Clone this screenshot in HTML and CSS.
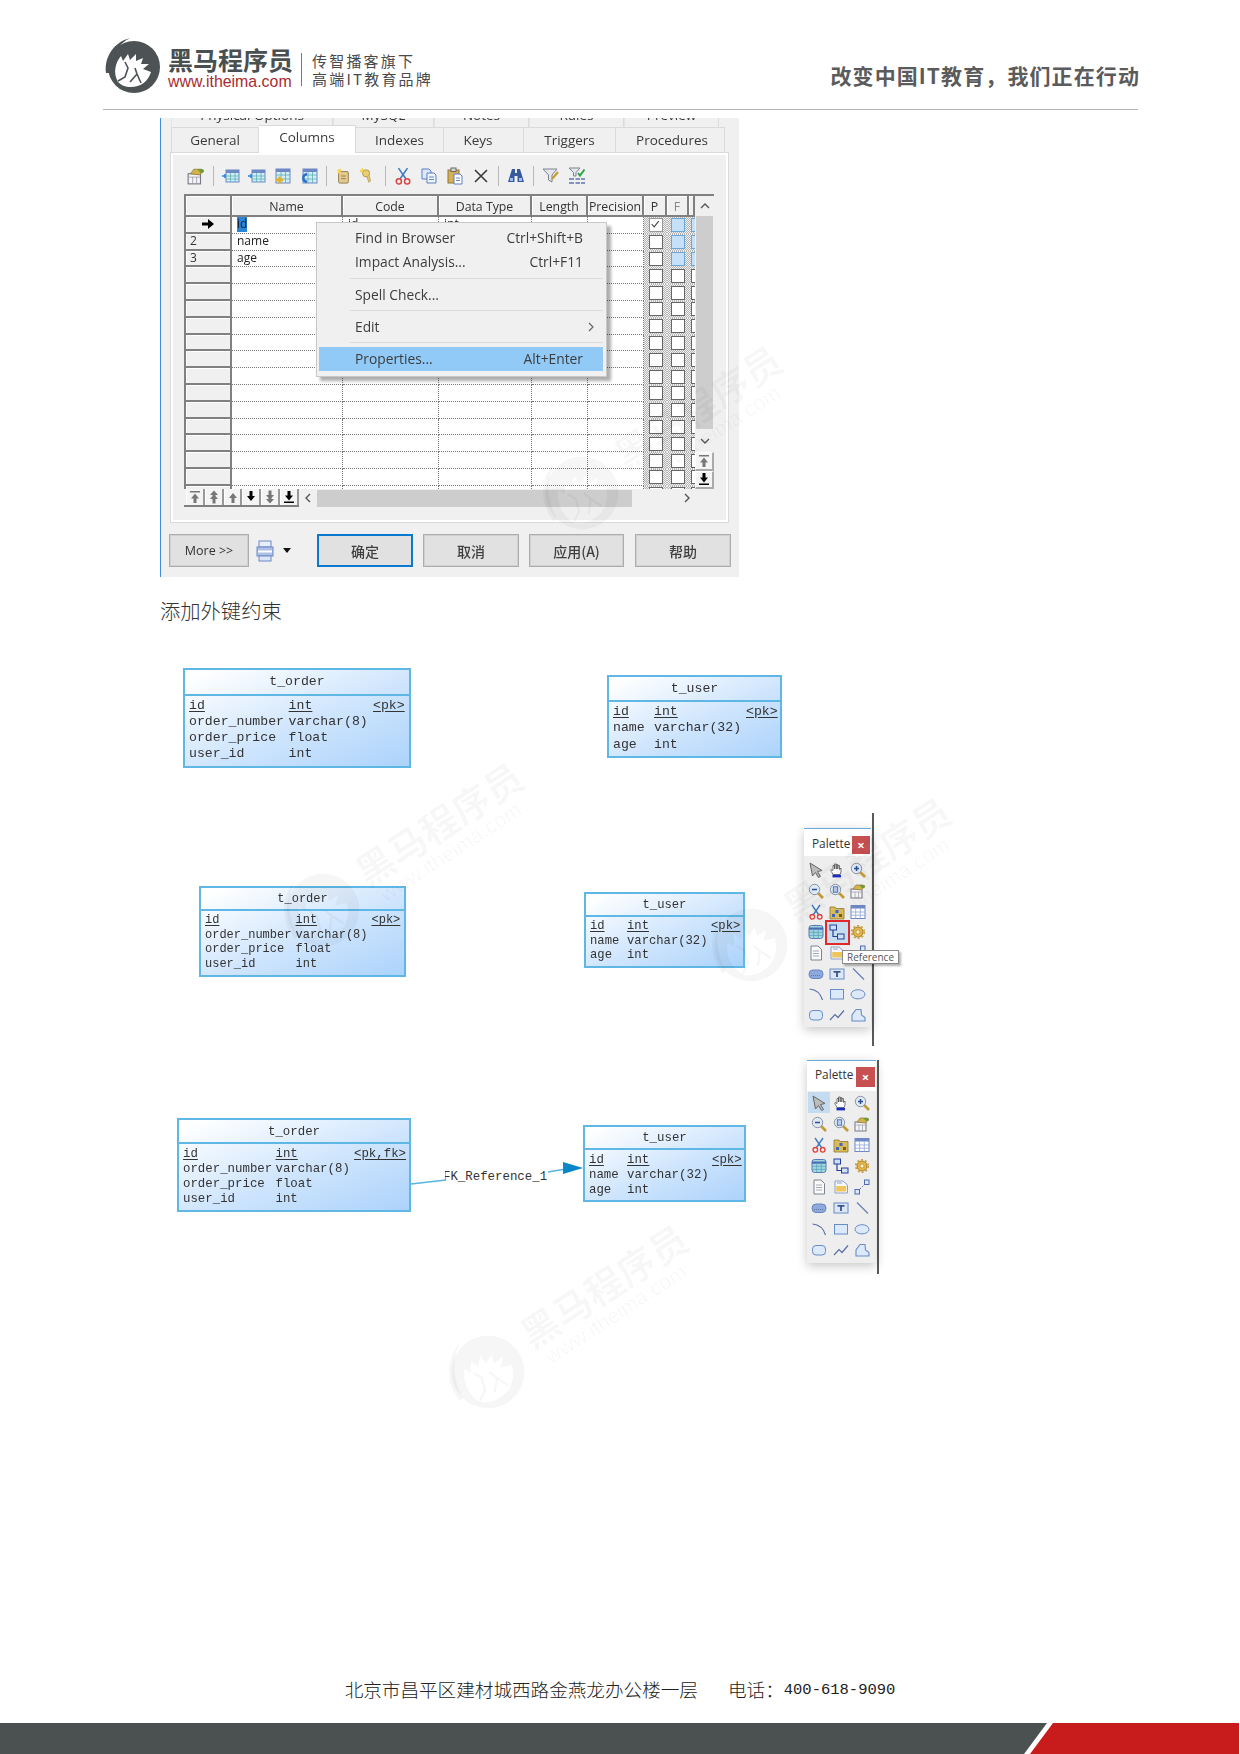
FILE: index.html
```html
<!DOCTYPE html>
<html lang="zh-CN">
<head>
<meta charset="utf-8">
<title>添加外键约束</title>
<link rel="stylesheet" href="styles.css">
</head>
<body>
<svg class="defs" xmlns="http://www.w3.org/2000/svg">
  <symbol id="horse" viewBox="0 0 60 60">
    <path fill-rule="evenodd" d="M30 4a26 26 0 1 0 0 52a26 26 0 1 0 0-52Z M14 45C9 36 11 26 17 19L19 24L24 17L26 23L32 17L32 24L39 21L37 27L45 27L39 32L47 35C44 45 36 50 27 50C21 50 17 48 14 45Z"/>
    <path d="M37 46L33 37L31 31M33 37L26 45M14 44L21 40L24 31L21 25" fill="none" stroke="currentColor" stroke-width="1.6"/>
    <path d="M2 36C0 20 10 5 26 1C14 7 6 20 5 36Z"/>
  </symbol>
  <symbol id="p-arrow" viewBox="0 0 16 16"><path d="M2 1L14 8.5L9.5 9.5L12.5 14.5L10.5 15.5L7.5 10.5L4.5 14Z" fill="#bcbcbc" stroke="#666"/></symbol>
  <symbol id="p-hand" viewBox="0 0 16 16"><path d="M4 12.5C3 10 1 8.5 2 7.5L4 8.5V3.5H5.5V7V2H7.2V7V2.5H8.8V7V3.5H10.5V7.5L12 6V10L11 12.5Z" fill="#fff" stroke="#555" stroke-width=".8"/><rect x="3.5" y="12.8" width="8.5" height="2.6" fill="#1a2fc0"/></symbol>
  <symbol id="p-zoomin" viewBox="0 0 16 16"><path d="M10 10L15 15" stroke="#c29b34" stroke-width="2.6"/><circle cx="6.5" cy="6.5" r="5.2" fill="#dfe9f3" stroke="#8a94a0"/><path d="M4 6.5H9M6.5 4V9" stroke="#2b4f96" stroke-width="1.5"/></symbol>
  <symbol id="p-zoomout" viewBox="0 0 16 16"><path d="M10 10L15 15" stroke="#c29b34" stroke-width="2.6"/><circle cx="6.5" cy="6.5" r="5.2" fill="#dfe9f3" stroke="#8a94a0"/><path d="M4 6.5H9" stroke="#2b4f96" stroke-width="1.5"/></symbol>
  <symbol id="p-zoomfit" viewBox="0 0 16 16"><path d="M10 10L15 15" stroke="#c29b34" stroke-width="2.6"/><circle cx="6.5" cy="6.5" r="5.2" fill="#dfe9f3" stroke="#8a94a0"/><rect x="4.3" y="3.8" width="4.4" height="5.4" fill="#b9cdf0" stroke="#3b5fa8" stroke-width=".8"/></symbol>
  <symbol id="p-props" viewBox="0 0 16 16"><rect x="1" y="6" width="11" height="9" fill="#f4f4f4" stroke="#778"/><path d="M1 9H12M5 9V15M8.5 9V15" stroke="#99a" stroke-width=".7"/><path d="M3 6L6 2H13L15 3.5L11 7Z" fill="#d5b24a" stroke="#8d7a36" stroke-width=".7"/><path d="M9 2H14.5V5H12Z" fill="#6f9a3c"/></symbol>
  <symbol id="p-scissors" viewBox="0 0 16 16"><path d="M4 1L10.5 10.5M12 1L5.5 10.5" stroke="#3f7cc2" stroke-width="1.4"/><circle cx="4.3" cy="12.8" r="2.3" fill="none" stroke="#e0413d" stroke-width="1.3"/><circle cx="11.7" cy="12.8" r="2.3" fill="none" stroke="#e0413d" stroke-width="1.3"/></symbol>
  <symbol id="p-pkg" viewBox="0 0 16 16"><path d="M1 3H6L7 4.5H15V15H1Z" fill="#d9ba5c" stroke="#8f7834" stroke-width=".8"/><rect x="6.5" y="6" width="3" height="3" fill="#3e67c0"/><rect x="3" y="10" width="3" height="3" fill="#3e67c0"/><rect x="10" y="10" width="3" height="3" fill="#7a5c14"/></symbol>
  <symbol id="p-table" viewBox="0 0 16 16"><rect x="1" y="1.5" width="14" height="13" fill="#fff" stroke="#6d88c5"/><rect x="1" y="1.5" width="14" height="3" fill="#6d88c5"/><path d="M1 8H15M1 11.2H15M5.7 4.5V14.5M10.3 4.5V14.5" stroke="#8ea3d6" stroke-width=".8"/></symbol>
  <symbol id="p-troll" viewBox="0 0 16 16"><rect x="1" y="1.5" width="14" height="13" rx="2.5" fill="#9fdade" stroke="#5b78b8"/><path d="M1 4.6H15" stroke="#4c6bb5" stroke-width="2.2"/><path d="M1 8.3H15M1 11.4H15M5.7 5V14.5M10.3 5V14.5" stroke="#5e9fc0" stroke-width=".8"/></symbol>
  <symbol id="p-ref" viewBox="0 0 16 16"><path d="M4 6V12.5H9" fill="none" stroke="#223f9a" stroke-width="1.2"/><rect x="1" y="1" width="6.5" height="5" fill="#cfe0f7" stroke="#223f9a"/><rect x="8.5" y="10" width="6.5" height="5" fill="#cfe0f7" stroke="#223f9a"/></symbol>
  <symbol id="p-gear" viewBox="0 0 16 16"><circle cx="8" cy="8" r="5" fill="#e5b547" stroke="#a4802f"/><circle cx="8" cy="8" r="6.3" fill="none" stroke="#c99f3c" stroke-width="1.6" stroke-dasharray="2 2"/><circle cx="8" cy="8" r="2" fill="#fff2c4" stroke="#a4802f" stroke-width=".6"/></symbol>
  <symbol id="p-note" viewBox="0 0 16 16"><path d="M3 1H10L13.5 4.5V15H3Z" fill="#fafafa" stroke="#7b8290"/><path d="M5 6H11M5 8.5H11M5 11H11" stroke="#9ba3b0" stroke-width=".9"/></symbol>
  <symbol id="p-file" viewBox="0 0 16 16"><path d="M2 2H10L14.5 6V14H2Z" fill="#f5f7fb" stroke="#8f9fc5"/><rect x="3.2" y="7" width="10" height="5.5" fill="#eec65c"/><path d="M4 4H9" stroke="#8f9fc5"/></symbol>
  <symbol id="p-nodes" viewBox="0 0 16 16"><path d="M4 12L12 4" stroke="#4d6ab8" stroke-dasharray="1.5 1.5"/><rect x="1" y="10.5" width="4.5" height="4.5" fill="#dce8f8" stroke="#4d6ab8"/><rect x="10.5" y="1" width="4.5" height="4.5" fill="#dce8f8" stroke="#4d6ab8"/></symbol>
  <symbol id="p-view" viewBox="0 0 16 16"><rect x="1" y="4" width="14" height="8.5" rx="4" fill="#8ea9dc" stroke="#6a86c2"/><path d="M3 9.5H13" stroke="#62789c" stroke-dasharray="1 1"/></symbol>
  <symbol id="p-t" viewBox="0 0 16 16"><rect x="1" y="3" width="14" height="10" fill="#dbe7f7" stroke="#6a8cc8"/><rect x="4.5" y="5" width="7" height="1.7" fill="#3b5387"/><rect x="7.1" y="5" width="1.8" height="6" fill="#3b5387"/></symbol>
  <symbol id="p-line" viewBox="0 0 16 16"><path d="M3 2.5L14 13.5" stroke="#6b7fb8" stroke-width="1.2"/></symbol>
  <symbol id="p-arc" viewBox="0 0 16 16"><path d="M1.5 3C8 3.5 12.5 7.5 14.5 14" fill="none" stroke="#5c6fa5" stroke-width="1.2"/></symbol>
  <symbol id="p-rect" viewBox="0 0 16 16"><rect x="1.5" y="3.5" width="13" height="9.5" fill="#dce9f9" stroke="#6a8cc8"/></symbol>
  <symbol id="p-ellipse" viewBox="0 0 16 16"><ellipse cx="8" cy="8.3" rx="7" ry="4.6" fill="#dce9f9" stroke="#6a8cc8"/></symbol>
  <symbol id="p-rrect" viewBox="0 0 16 16"><rect x="1.5" y="3.5" width="13" height="9.5" rx="3.5" fill="#dce9f9" stroke="#6a8cc8"/></symbol>
  <symbol id="p-poly" viewBox="0 0 16 16"><path d="M1 13L6 7.5L9 10.5L15 3.5" fill="none" stroke="#5c6fa5" stroke-width="1.2"/></symbol>
  <symbol id="p-polygon" viewBox="0 0 16 16"><path d="M2 14V8L6 2.5H11L11.5 8L15 10.5V14Z" fill="#dce9f9" stroke="#6a8cc8" stroke-width="1.1"/></symbol>
  <symbol id="t-ins" viewBox="0 0 18 18"><rect x="4" y="3" width="13" height="12" fill="#d4ecf4" stroke="#6d88c5"/><rect x="4" y="3" width="13" height="3" fill="#6d88c5"/><path d="M4 9H17M4 12H17M8.5 6V15M13 6V15" stroke="#5ab0b8" stroke-width=".8"/><path d="M0 9H3M3 7V11" stroke="#2c84d8" stroke-width="1.6"/></symbol>
  <symbol id="t-add" viewBox="0 0 18 18"><rect x="2" y="2" width="14" height="14" fill="#d4ecf4" stroke="#6d88c5"/><rect x="2" y="2" width="14" height="3" fill="#6d88c5"/><path d="M2 8H16M2 12H16M7 5V16M11.5 5V16" stroke="#5ab0b8" stroke-width=".8"/><path d="M2 13H9M5.5 9.5V16.5" stroke="#e4b32d" stroke-width="2.4"/></symbol>
  <symbol id="t-cp" viewBox="0 0 18 18"><rect x="3" y="2" width="14" height="14" fill="#d4ecf4" stroke="#6d88c5"/><rect x="3" y="2" width="14" height="3" fill="#6d88c5"/><path d="M3 8H17M3 12H17M8 5V16M12.5 5V16" stroke="#5ab0b8" stroke-width=".8"/><path d="M7 7C2 8 2 14 7 15" fill="none" stroke="#2f6fc5" stroke-width="2.4"/></symbol>
  <symbol id="t-doc" viewBox="0 0 18 18"><rect x="4" y="4" width="11" height="13" rx="1.5" fill="#e3c98c" stroke="#8b7748"/><path d="M7 9H12M7 12H12" stroke="#8b7748"/><path d="M3 2L6 4.5M6 1V4M3 5.5L6 4.5" stroke="#f2d34b" stroke-width="2"/></symbol>
  <symbol id="t-key" viewBox="0 0 18 18"><circle cx="8" cy="6" r="4" fill="#e9cf6e" stroke="#a8904a"/><path d="M9 9.5L11 16L13 14.5L11.5 9" fill="#e9cf6e" stroke="#a8904a" stroke-width=".8"/><path d="M1 3L4 4.5M3 0.5L5 3" stroke="#f2d34b" stroke-width="2"/></symbol>
  <symbol id="t-copy" viewBox="0 0 18 18"><path d="M2 2H9L11 4V12H2Z" fill="#dce8f7" stroke="#5a7fc3"/><path d="M7 6H14L16 8V16H7Z" fill="#eef4fc" stroke="#5a7fc3"/><path d="M9 10H14M9 12.5H14" stroke="#5a7fc3" stroke-width=".9"/></symbol>
  <symbol id="t-paste" viewBox="0 0 18 18"><rect x="2" y="3" width="11" height="13" fill="#d5b155" stroke="#8d7532"/><rect x="5" y="1" width="5" height="3.5" fill="#d8d8d8" stroke="#666"/><path d="M8 7H14L16 9V17H8Z" fill="#fff" stroke="#5a7fc3"/><path d="M10 11H14M10 13.5H14" stroke="#5a7fc3" stroke-width=".9"/></symbol>
  <symbol id="t-x" viewBox="0 0 18 18"><path d="M3 3L15 15M15 3L3 15" stroke="#3a3a3a" stroke-width="1.6"/></symbol>
  <symbol id="t-bin" viewBox="0 0 18 18"><path d="M5 2H8V6H10V2H13L17 15H10.5V9H7.5V15H1Z" fill="#39599e"/><rect x="3" y="11" width="3" height="3" fill="#9fc0f0"/><rect x="12" y="11" width="3" height="3" fill="#9fc0f0"/></symbol>
  <symbol id="t-filter" viewBox="0 0 18 18"><path d="M1 2H15L10 8V15L6.5 13V8Z" fill="#e4e7ec" stroke="#7d8290"/><path d="M10 12L16 5" stroke="#c99b2e" stroke-width="2.2"/></symbol>
  <symbol id="t-filterok" viewBox="0 0 18 18"><path d="M1 1H12L8 5.5V9H5.5V5.5Z" fill="#e4e7ec" stroke="#7d8290"/><path d="M10 6L12 8.5L16.5 2.5" fill="none" stroke="#2aa64a" stroke-width="2"/><path d="M1 11H6V13H1ZM7.5 11H12V13H7.5ZM13 11H17V13H13ZM1 15H6V17H1ZM7.5 15H12V17H7.5ZM13 15H17V17H13Z" fill="#8394c3"/></symbol>
  <symbol id="t-print" viewBox="0 0 18 22"><rect x="3" y="1" width="12" height="6" fill="#e8eefb" stroke="#6e89c8"/><rect x="1" y="7" width="16" height="9" fill="#aebfe6" stroke="#6e89c8"/><path d="M2 11.5H16" stroke="#fff" stroke-width="2"/><rect x="3" y="16" width="12" height="5" fill="#dce4f6" stroke="#6e89c8"/></symbol>
  <symbol id="n-up" viewBox="0 0 12 14"><path d="M6 3L10 8H7.5V13H4.5V8H2Z"/></symbol>
  <symbol id="n-upbar" viewBox="0 0 12 14"><path d="M1 1H11V2.4H1ZM6 3.5L10 8.5H7.5V13H4.5V8.5H2Z"/></symbol>
  <symbol id="n-updbl" viewBox="0 0 12 14"><path d="M6 0.5L10 5H7.5V6L10 9H7.5V13.5H4.5V9H2L4.5 6V5H2Z"/></symbol>
</svg>

<div class="page">
  <header class="header">
    <svg class="logo"><use href="#horse"/></svg>
    <div class="brand">
      <div class="brand-name">黑马程序员</div>
      <div class="brand-url">www.itheima.com</div>
    </div>
    <div class="brand-div"></div>
    <div class="tagline">
      <div>传智播客旗下</div>
      <div>高端IT教育品牌</div>
    </div>
    <div class="slogan">改变中国IT教育，我们正在行动</div>
  </header>

  <main class="doc">
    <section class="dialog">
      <div class="tabs-back">
        <span class="tb-a">Physical Options</span><span class="tb-b">MySQL</span><span class="tb-c">Notes</span><span class="tb-c">Rules</span><span class="tb-c">Preview</span>
      </div>
      <div class="tabs">
        <span class="tab t-gen">General</span><span class="tab tab-on t-col">Columns</span><span class="tab t-idx">Indexes</span><span class="tab t-key">Keys</span><span class="tab t-trg">Triggers</span><span class="tab t-pro">Procedures</span>
      </div>
      <div class="panel">
        <div class="toolbar">
          <svg class="ti"><use href="#p-props"/></svg><i class="sep"></i>
          <svg class="ti"><use href="#t-ins"/></svg><svg class="ti"><use href="#t-ins"/></svg><svg class="ti"><use href="#t-add"/></svg><svg class="ti"><use href="#t-cp"/></svg><i class="sep"></i>
          <svg class="ti ti-n"><use href="#t-doc"/></svg><svg class="ti ti-n"><use href="#t-key"/></svg><i class="sep sep-w"></i>
          <svg class="ti"><use href="#p-scissors"/></svg><svg class="ti"><use href="#t-copy"/></svg><svg class="ti"><use href="#t-paste"/></svg><svg class="ti"><use href="#t-x"/></svg><i class="sep"></i>
          <svg class="ti"><use href="#t-bin"/></svg><i class="sep"></i>
          <svg class="ti"><use href="#t-filter"/></svg><svg class="ti"><use href="#t-filterok"/></svg>
        </div>
        <div class="grid">
          <div class="grid-top">
            <div class="grid-main">
              <div class="row row-head"><span class="hc"></span><span class="hc">Name</span><span class="hc">Code</span><span class="hc">Data Type</span><span class="hc">Length</span><span class="hc">Precision</span><span class="hc">P</span><span class="hc hc-dim">F</span><span class="hc"></span></div>
              <div class="row"><span class="rh rh-arrow"><svg class="arrow" viewBox="0 0 12 10"><path d="M0 3.5H6V0L12 5L6 10V6.5H0Z"/></svg></span><span class="c"><span class="sel">id</span></span><span class="c">id</span><span class="c">int</span><span class="c"></span><span class="c"></span><span class="pf"><b class="cb cb-on"><svg viewBox="0 0 12 12"><path d="M2 6L5 9.5L10.5 2.5" fill="none" stroke="#444" stroke-width="1.3"/></svg></b></span><span class="pf"><b class="cb cb-blue"></b></span><span class="pf pf-clip"><b class="cb cb-blue"></b></span></div>
              <div class="row"><span class="rh">2</span><span class="c">name</span><span class="c"></span><span class="c"></span><span class="c"></span><span class="c"></span><span class="pf"><b class="cb"></b></span><span class="pf"><b class="cb cb-blue"></b></span><span class="pf pf-clip"><b class="cb cb-blue"></b></span></div>
              <div class="row"><span class="rh">3</span><span class="c">age</span><span class="c"></span><span class="c"></span><span class="c"></span><span class="c"></span><span class="pf"><b class="cb"></b></span><span class="pf"><b class="cb cb-blue"></b></span><span class="pf pf-clip"><b class="cb cb-blue"></b></span></div>
              <div class="row"><span class="rh"></span><span class="c"></span><span class="c"></span><span class="c"></span><span class="c"></span><span class="c"></span><span class="pf"><b class="cb"></b></span><span class="pf"><b class="cb"></b></span><span class="pf pf-clip"><b class="cb"></b></span></div>
              <div class="row"><span class="rh"></span><span class="c"></span><span class="c"></span><span class="c"></span><span class="c"></span><span class="c"></span><span class="pf"><b class="cb"></b></span><span class="pf"><b class="cb"></b></span><span class="pf pf-clip"><b class="cb"></b></span></div>
              <div class="row"><span class="rh"></span><span class="c"></span><span class="c"></span><span class="c"></span><span class="c"></span><span class="c"></span><span class="pf"><b class="cb"></b></span><span class="pf"><b class="cb"></b></span><span class="pf pf-clip"><b class="cb"></b></span></div>
              <div class="row"><span class="rh"></span><span class="c"></span><span class="c"></span><span class="c"></span><span class="c"></span><span class="c"></span><span class="pf"><b class="cb"></b></span><span class="pf"><b class="cb"></b></span><span class="pf pf-clip"><b class="cb"></b></span></div>
              <div class="row"><span class="rh"></span><span class="c"></span><span class="c"></span><span class="c"></span><span class="c"></span><span class="c"></span><span class="pf"><b class="cb"></b></span><span class="pf"><b class="cb"></b></span><span class="pf pf-clip"><b class="cb"></b></span></div>
              <div class="row"><span class="rh"></span><span class="c"></span><span class="c"></span><span class="c"></span><span class="c"></span><span class="c"></span><span class="pf"><b class="cb"></b></span><span class="pf"><b class="cb"></b></span><span class="pf pf-clip"><b class="cb"></b></span></div>
              <div class="row"><span class="rh"></span><span class="c"></span><span class="c"></span><span class="c"></span><span class="c"></span><span class="c"></span><span class="pf"><b class="cb"></b></span><span class="pf"><b class="cb"></b></span><span class="pf pf-clip"><b class="cb"></b></span></div>
              <div class="row"><span class="rh"></span><span class="c"></span><span class="c"></span><span class="c"></span><span class="c"></span><span class="c"></span><span class="pf"><b class="cb"></b></span><span class="pf"><b class="cb"></b></span><span class="pf pf-clip"><b class="cb"></b></span></div>
              <div class="row"><span class="rh"></span><span class="c"></span><span class="c"></span><span class="c"></span><span class="c"></span><span class="c"></span><span class="pf"><b class="cb"></b></span><span class="pf"><b class="cb"></b></span><span class="pf pf-clip"><b class="cb"></b></span></div>
              <div class="row"><span class="rh"></span><span class="c"></span><span class="c"></span><span class="c"></span><span class="c"></span><span class="c"></span><span class="pf"><b class="cb"></b></span><span class="pf"><b class="cb"></b></span><span class="pf pf-clip"><b class="cb"></b></span></div>
              <div class="row"><span class="rh"></span><span class="c"></span><span class="c"></span><span class="c"></span><span class="c"></span><span class="c"></span><span class="pf"><b class="cb"></b></span><span class="pf"><b class="cb"></b></span><span class="pf pf-clip"><b class="cb"></b></span></div>
              <div class="row"><span class="rh"></span><span class="c"></span><span class="c"></span><span class="c"></span><span class="c"></span><span class="c"></span><span class="pf"><b class="cb"></b></span><span class="pf"><b class="cb"></b></span><span class="pf pf-clip"><b class="cb"></b></span></div>
              <div class="row"><span class="rh"></span><span class="c"></span><span class="c"></span><span class="c"></span><span class="c"></span><span class="c"></span><span class="pf"><b class="cb"></b></span><span class="pf"><b class="cb"></b></span><span class="pf pf-clip"><b class="cb"></b></span></div>
              <div class="row"><span class="rh"></span><span class="c"></span><span class="c"></span><span class="c"></span><span class="c"></span><span class="c"></span><span class="pf"><b class="cb"></b></span><span class="pf"><b class="cb"></b></span><span class="pf pf-clip"><b class="cb"></b></span></div>
            </div>
            <div class="vscroll">
              <span class="vs-arrow vs-up"><svg viewBox="0 0 10 6"><path d="M1 5L5 1L9 5" fill="none" stroke="#555" stroke-width="1.4"/></svg></span>
              <span class="vs-thumb"></span>
              <span class="vs-arrow vs-down"><svg viewBox="0 0 10 6"><path d="M1 1L5 5L9 1" fill="none" stroke="#555" stroke-width="1.4"/></svg></span>
              <span class="vs-btn"><svg class="vs-ico vs-ico-dim"><use href="#n-upbar"/></svg></span>
              <span class="vs-btn"><svg class="vs-ico flip"><use href="#n-upbar"/></svg></span>
            </div>
          </div>
          <div class="grid-bot">
            <div class="navs">
              <span class="nav dim"><svg class="nav-ico"><use href="#n-upbar"/></svg></span>
              <span class="nav dim"><svg class="nav-ico"><use href="#n-updbl"/></svg></span>
              <span class="nav dim"><svg class="nav-ico"><use href="#n-up"/></svg></span>
              <span class="nav"><svg class="nav-ico flip"><use href="#n-up"/></svg></span>
              <span class="nav dim"><svg class="nav-ico flip"><use href="#n-updbl"/></svg></span>
              <span class="nav"><svg class="nav-ico flip"><use href="#n-upbar"/></svg></span>
            </div>
            <svg class="hs-arrow" viewBox="0 0 6 10"><path d="M5 1L1 5L5 9" fill="none" stroke="#555" stroke-width="1.4"/></svg>
            <span class="hs-thumb"></span>
            <svg class="hs-arrow hs-right" viewBox="0 0 6 10"><path d="M1 1L5 5L1 9" fill="none" stroke="#555" stroke-width="1.4"/></svg>
          </div>
        </div>
      </div>
      <div class="btns">
        <span class="btn b-more">More &gt;&gt;</span>
        <svg class="print"><use href="#t-print"/></svg>
        <i class="caret"></i>
        <span class="btn btn-def b-ok">确定</span>
        <span class="btn b-no">取消</span>
        <span class="btn b-app">应用(A)</span>
        <span class="btn b-help">帮助</span>
      </div>

      <div class="menu">
        <div class="mi"><span>Find in Browser</span><span>Ctrl+Shift+B</span></div>
        <div class="mi"><span>Impact Analysis...</span><span>Ctrl+F11</span></div>
        <div class="msep"></div>
        <div class="mi"><span>Spell Check...</span></div>
        <div class="msep"></div>
        <div class="mi mi-sub"><span>Edit</span><svg class="chev" viewBox="0 0 6 10"><path d="M1 1L5 5L1 9" fill="none" stroke="#666" stroke-width="1.2"/></svg></div>
        <div class="msep"></div>
        <div class="mi mi-on"><span>Properties...</span><span>Alt+Enter</span></div>
      </div>
    </section>

    <p class="caption">添加外键约束</p>

    <section class="canvas">
      <div class="er o1">
        <div class="er-title">t_order</div>
        <div class="er-body">
          <div class="er-row"><u>id</u><u>int</u><u>&lt;pk&gt;</u></div>
          <div class="er-row"><span>order_number</span><span>varchar(8)</span></div>
          <div class="er-row"><span>order_price</span><span>float</span></div>
          <div class="er-row"><span>user_id</span><span>int</span></div>
        </div>
      </div>
      <div class="er u1">
        <div class="er-title">t_user</div>
        <div class="er-body">
          <div class="er-row"><u>id</u><u>int</u><u>&lt;pk&gt;</u></div>
          <div class="er-row"><span>name</span><span>varchar(32)</span></div>
          <div class="er-row"><span>age</span><span>int</span></div>
        </div>
      </div>
      <div class="er o2">
        <div class="er-title">t_order</div>
        <div class="er-body">
          <div class="er-row"><u>id</u><u>int</u><u>&lt;pk&gt;</u></div>
          <div class="er-row"><span>order_number</span><span>varchar(8)</span></div>
          <div class="er-row"><span>order_price</span><span>float</span></div>
          <div class="er-row"><span>user_id</span><span>int</span></div>
        </div>
      </div>
      <div class="er u2">
        <div class="er-title">t_user</div>
        <div class="er-body">
          <div class="er-row"><u>id</u><u>int</u><u>&lt;pk&gt;</u></div>
          <div class="er-row"><span>name</span><span>varchar(32)</span></div>
          <div class="er-row"><span>age</span><span>int</span></div>
        </div>
      </div>
      <div class="er o3">
        <div class="er-title">t_order</div>
        <div class="er-body">
          <div class="er-row"><u>id</u><u>int</u><u>&lt;pk,fk&gt;</u></div>
          <div class="er-row"><span>order_number</span><span>varchar(8)</span></div>
          <div class="er-row"><span>order_price</span><span>float</span></div>
          <div class="er-row"><span>user_id</span><span>int</span></div>
        </div>
      </div>
      <div class="er u3">
        <div class="er-title">t_user</div>
        <div class="er-body">
          <div class="er-row"><u>id</u><u>int</u><u>&lt;pk&gt;</u></div>
          <div class="er-row"><span>name</span><span>varchar(32)</span></div>
          <div class="er-row"><span>age</span><span>int</span></div>
        </div>
      </div>

      <svg class="link" viewBox="0 0 172 30"><path d="M0 24L35 20M137 12L155 9" stroke="#59b4e2" stroke-width="1.5" fill="none"/><path d="M172 8L152 2V14Z" fill="#0a87c8"/></svg>
      <div class="link-label">FK_Reference_1</div>

      <i class="vline v1"></i>
      <div class="palette pal1">
        <div class="pal-title"><span>Palette</span><b class="pal-x">×</b></div>
        <div class="pal-grid">
          <span class="cell"><svg class="pi"><use href="#p-arrow"/></svg></span><span class="cell"><svg class="pi"><use href="#p-hand"/></svg></span><span class="cell"><svg class="pi"><use href="#p-zoomin"/></svg></span>
          <span class="cell"><svg class="pi"><use href="#p-zoomout"/></svg></span><span class="cell"><svg class="pi"><use href="#p-zoomfit"/></svg></span><span class="cell"><svg class="pi"><use href="#p-props"/></svg></span>
          <span class="cell"><svg class="pi"><use href="#p-scissors"/></svg></span><span class="cell"><svg class="pi"><use href="#p-pkg"/></svg></span><span class="cell"><svg class="pi"><use href="#p-table"/></svg></span>
          <span class="cell"><svg class="pi"><use href="#p-troll"/></svg></span><span class="cell cell-red"><svg class="pi"><use href="#p-ref"/></svg></span><span class="cell"><svg class="pi"><use href="#p-gear"/></svg></span>
          <span class="cell"><svg class="pi"><use href="#p-note"/></svg></span><span class="cell"><svg class="pi"><use href="#p-file"/></svg></span><span class="cell"><svg class="pi"><use href="#p-nodes"/></svg></span>
          <span class="cell"><svg class="pi"><use href="#p-view"/></svg></span><span class="cell"><svg class="pi"><use href="#p-t"/></svg></span><span class="cell"><svg class="pi"><use href="#p-line"/></svg></span>
          <span class="cell"><svg class="pi"><use href="#p-arc"/></svg></span><span class="cell"><svg class="pi"><use href="#p-rect"/></svg></span><span class="cell"><svg class="pi"><use href="#p-ellipse"/></svg></span>
          <span class="cell"><svg class="pi"><use href="#p-rrect"/></svg></span><span class="cell"><svg class="pi"><use href="#p-poly"/></svg></span><span class="cell"><svg class="pi"><use href="#p-polygon"/></svg></span>
        </div>
      </div>
      <div class="tooltip">Reference</div>

      <i class="vline v2"></i>
      <div class="palette pal2">
        <div class="pal-title"><span>Palette</span><b class="pal-x">×</b></div>
        <div class="pal-grid">
          <span class="cell cell-sel"><svg class="pi"><use href="#p-arrow"/></svg></span><span class="cell"><svg class="pi"><use href="#p-hand"/></svg></span><span class="cell"><svg class="pi"><use href="#p-zoomin"/></svg></span>
          <span class="cell"><svg class="pi"><use href="#p-zoomout"/></svg></span><span class="cell"><svg class="pi"><use href="#p-zoomfit"/></svg></span><span class="cell"><svg class="pi"><use href="#p-props"/></svg></span>
          <span class="cell"><svg class="pi"><use href="#p-scissors"/></svg></span><span class="cell"><svg class="pi"><use href="#p-pkg"/></svg></span><span class="cell"><svg class="pi"><use href="#p-table"/></svg></span>
          <span class="cell"><svg class="pi"><use href="#p-troll"/></svg></span><span class="cell"><svg class="pi"><use href="#p-ref"/></svg></span><span class="cell"><svg class="pi"><use href="#p-gear"/></svg></span>
          <span class="cell"><svg class="pi"><use href="#p-note"/></svg></span><span class="cell"><svg class="pi"><use href="#p-file"/></svg></span><span class="cell"><svg class="pi"><use href="#p-nodes"/></svg></span>
          <span class="cell"><svg class="pi"><use href="#p-view"/></svg></span><span class="cell"><svg class="pi"><use href="#p-t"/></svg></span><span class="cell"><svg class="pi"><use href="#p-line"/></svg></span>
          <span class="cell"><svg class="pi"><use href="#p-arc"/></svg></span><span class="cell"><svg class="pi"><use href="#p-rect"/></svg></span><span class="cell"><svg class="pi"><use href="#p-ellipse"/></svg></span>
          <span class="cell"><svg class="pi"><use href="#p-rrect"/></svg></span><span class="cell"><svg class="pi"><use href="#p-poly"/></svg></span><span class="cell"><svg class="pi"><use href="#p-polygon"/></svg></span>
        </div>
      </div>
    </section>
  </main>

  <footer class="footer">
    <div class="addr"><span>北京市昌平区建材城西路金燕龙办公楼一层</span><span>电话：<span class="tel">400-618-9090</span></span></div>
    <svg class="bar" viewBox="0 0 1240 31" preserveAspectRatio="none"><rect width="1240" height="31" fill="#4a5150"/><path d="M1047 0H1240V31H1024Z" fill="#fff"/><path d="M1053 0H1239V31H1030Z" fill="#c81c1c"/></svg>
  </footer>

  <div class="wm wm1"><svg class="wm-logo"><use href="#horse"/></svg><div class="wm-text"><div class="wm-name">黑马程序员<sup class="wm-tm">TM</sup></div><div class="wm-url">www.itheima.com</div></div></div>
  <div class="wm wm2"><svg class="wm-logo"><use href="#horse"/></svg><div class="wm-text"><div class="wm-name">黑马程序员<sup class="wm-tm">TM</sup></div><div class="wm-url">www.itheima.com</div></div></div>
  <div class="wm wm3"><svg class="wm-logo"><use href="#horse"/></svg><div class="wm-text"><div class="wm-name">黑马程序员<sup class="wm-tm">TM</sup></div><div class="wm-url">www.itheima.com</div></div></div>
  <div class="wm wm4"><svg class="wm-logo"><use href="#horse"/></svg><div class="wm-text"><div class="wm-name">黑马程序员<sup class="wm-tm">TM</sup></div><div class="wm-url">www.itheima.com</div></div></div>
</div>
</body>
</html>
```

FILE: styles.css
```css
* { box-sizing: border-box; }
html, body { margin: 0; padding: 0; background: #fff; }
.defs { display: none; }

.page {
  position: relative;
  width: 1240px;
  height: 1754px;
  overflow: hidden;
  display: flex;
  flex-direction: column;
  background: #fff;
  font-family: "Noto Sans CJK SC", "Noto Sans", sans-serif;
}

/* header */
.header {
  flex: none;
  height: 110px;
  margin: 0 102px 0 103px;
  display: flex;
  align-items: flex-start;
  border-bottom: 1px solid #b4b4b4;
}
.logo { width: 60px; height: 60px; margin: 37px 0 0 1px; color: #4d5354; fill: #4d5354; }
.brand { margin: 0 0 0 4px; padding-top: 45px; width: 128px; }
.brand-name { font-size: 25px; line-height: 29px; font-weight: 700; color: #4a4f50; white-space: nowrap; }
.brand-url { font-family: "Liberation Sans", Arial, sans-serif; font-size: 15.9px; line-height: 16px; color: #a92b2e; white-space: nowrap; }
.brand-div { width: 1px; height: 33px; margin: 53px 0 0 5px; background: #777; }
.tagline { margin: 52px 0 0 10px; font-size: 15px; line-height: 17.5px; letter-spacing: 2.2px; color: #4a4a4a; white-space: nowrap; }
.slogan { margin: 62px -2px 0 auto; font-size: 21px; line-height: 26px; font-weight: 700; letter-spacing: 1.1px; color: #5b5b5b; white-space: nowrap; }

.doc { flex: none; display: flex; flex-direction: column; }

/* dialog screenshot */
.dialog {
  position: relative;
  margin: 8px 0 0 160px;
  width: 579px;
  height: 459px;
  background: #f0f0f0;
  border-left: 1px solid #3a8fd8;
  font-family: "Open Sans", "Noto Sans CJK SC", sans-serif;
  color: #3a3a3a;
  display: flex;
  flex-direction: column;
  filter: blur(.35px);
}
.tabs-back {
  height: 9px;
  overflow: hidden;
  display: flex;
  padding-left: 10px;
  font-size: 13.5px;
  line-height: 14px;
  text-align: center;
}
.tabs-back span { border-right: 1px solid #dcdcdc; border-left: 1px solid #e4e4e4; margin-top: -10px; height: 22px; }
.tb-a { width: 162px; }
.tb-b { width: 101px; }
.tb-c { width: 95px; }
.tabs { height: 25px; display: flex; padding-left: 10px; position: relative; }
.tab {
  display: flex;
  align-items: center;
  justify-content: center;
  font-size: 13.5px;
  border: 1px solid #dadada;
  border-left: 0;
  border-bottom: 0;
  background: #f0f0f0;
  flex: none;
}
.t-gen { width: 88px; border-left: 1px solid #dadada; }
.t-col { width: 97px; }
.t-idx { width: 88px; }
.t-key { width: 80px; padding-right: 11px; }
.t-trg { width: 92px; }
.t-pro { width: 109px; padding-left: 4px; }
.tab-on { background: #fff; margin-top: -2px; height: 28px; padding-bottom: 5px; z-index: 1; }

.panel {
  width: 559px;
  height: 371px;
  margin-left: 9px;
  border: 1px solid #dadada;
  box-shadow: inset 0 0 0 2px #fff;
  background: #f0f0f0;
  display: flex;
  flex-direction: column;
}
.toolbar { flex: none; height: 41px; padding: 14px 0 0 16px; display: flex; align-items: flex-start; gap: 8px; }
.ti { width: 18px; height: 18px; flex: none; }
.ti-n { width: 16px; height: 18px; }
.sep { flex: none; width: 1px; height: 20px; background: #b9b9b9; margin-top: -1px; }
.sep-w { margin-left: 2px; }

.grid { margin-left: 13px; width: 530px; height: 313px; display: flex; flex-direction: column; }
.grid-top { display: flex; height: 295px; border-top: 2px solid #808080; border-left: 2px solid #808080; }
.grid-main { width: 509px; height: 293px; overflow: hidden; }
.row {
  display: grid;
  grid-template-columns: 46px 111px 96px 93px 56px 56px 23px 22px 6px;
  height: 16.8px;
  font-size: 12px;
  color: #222;
}
.row-head { height: 21px; font-size: 12.3px; }
.hc {
  display: flex; align-items: center; justify-content: center;
  padding-top: 1px;
  background: #f0f0f0;
  border-right: 2px solid #808080;
  border-bottom: 2px solid #808080;
  box-shadow: inset 1px 1px 0 #fff;
  color: #333;
  white-space: nowrap;
  overflow: hidden;
}
.hc-dim { color: #888; }
.rh {
  display: flex; align-items: center; padding-left: 4px;
  background: #f0f0f0;
  border-right: 2px solid #808080;
  border-bottom: 2px solid #808080;
  box-shadow: inset 1px 1px 0 #fff;
  color: #333;
  line-height: 1;
}
.rh-arrow { justify-content: center; padding-left: 0; }
.arrow { width: 12px; height: 10px; fill: #000; }
.c {
  display: block;
  background: #fff;
  border-right: 1px dotted #777;
  border-bottom: 1px dotted #777;
  padding: 0 0 0 5px;
  line-height: 14px;
  overflow: hidden;
}
.sel { background: #2a85d8; color: #123; }
.pf {
  display: flex; align-items: center; justify-content: center;
  background: repeating-conic-gradient(#b4b4b4 0 25%, #f0f0f0 0 50%) 0 0 / 2px 2px;
  overflow: hidden;
}
.pf-clip { justify-content: flex-start; padding-left: 2px; }
.cb { display: block; flex: none; width: 14px; height: 14px; background: #fff; border: 1.5px solid #666; }
.cb-on { border-color: #999; }
.cb-on svg { display: block; width: 10px; height: 10px; }
.cb-blue { background: #c6e0f8; border-color: #6ba6da; }

.vscroll { flex: 1; position: relative; display: flex; flex-direction: column; align-items: stretch; background: #f0f0f0; }
.vs-arrow { flex: none; display: flex; align-items: center; justify-content: center; }
.vs-arrow svg { width: 10px; height: 6px; }
.vs-up { height: 20px; }
.vs-thumb { flex: none; height: 213px; background: #cdcdcd; margin: 0 1px; }
.vs-down { height: 23px; }
.vs-btn { flex: none; height: 18.5px; display: flex; align-items: center; justify-content: center; background: #f4f4f4; border-right: 2px solid #aaa; border-bottom: 2px solid #aaa; border-left: 1px solid #fff; border-top: 1px solid #fff; }
.vs-ico { width: 12px; height: 14px; fill: #000; }
.vs-ico-dim { fill: #777; }
.flip { transform: scaleY(-1); }

.grid-bot { flex: none; height: 18px; display: flex; align-items: center; background: #f0f0f0; }
.navs { display: flex; flex: none; height: 18px; width: 115px; padding-left: 2px; border-bottom: 2px solid #808080; }
.nav { width: 19px; display: flex; align-items: center; justify-content: center; background: #f4f4f4; border-right: 2px solid #999; border-left: 1px solid #fff; fill: #000; }
.nav.dim { fill: #777; }
.nav-ico { width: 12px; height: 14px; }
.hs-arrow { flex: none; width: 6px; height: 10px; margin-left: 6px; }
.hs-thumb { flex: none; width: 315px; height: 17px; margin-left: 6px; background: #cdcdcd; }
.hs-right { margin-left: 52px; }

.btns { flex: none; display: flex; align-items: center; gap: 10px; height: 33px; margin-top: 11px; padding-left: 8px; }
.btn {
  display: flex; align-items: center; justify-content: center;
  flex: none;
  height: 33px;
  background: #e1e1e1;
  border: 1px solid #adadad;
  box-shadow: inset 0 0 0 1px #d0d0d0;
  font-size: 14px;
  font-weight: 500;
  font-family: "Noto Sans CJK SC", sans-serif;
  color: #3f3f3f;
}
.b-more { width: 80px; font-family: "Open Sans", sans-serif; font-size: 12.5px; font-weight: 400; color: #333; }
.print { width: 18px; height: 22px; margin-left: -3px; }
.caret { width: 0; height: 0; border: 4.5px solid transparent; border-top: 5px solid #111; border-bottom: 0; margin: 0 16px 0 -1px; }
.b-ok { width: 96px; }
.b-no { width: 96px; }
.b-app { width: 95px; }
.b-help { width: 96px; margin-left: 1px; }
.btn-def { border: 2px solid #0a7ad1; box-shadow: none; }

.menu {
  position: absolute;
  left: 155px;
  top: 104px;
  width: 291px;
  height: 155px;
  padding: 2px 3px 0 2px;
  background: #f0f0f0;
  border: 1px solid #c8c8c8;
  box-shadow: 4px 4px 3px rgba(0, 0, 0, .32);
  font-size: 13.8px;
  color: #3d3d3d;
}
.mi { height: 24.5px; display: flex; align-items: center; justify-content: space-between; padding: 0 20px 0 36px; white-space: nowrap; }
.mi-sub { padding-right: 9px; height: 24px; }
.chev { width: 6px; height: 10px; }
.mi-on { background: #91c9f7; height: 24px; margin-top: 1px; }
.msep { height: 1px; margin: 3.5px 0 3.5px 31px; background: #dcdcdc; }

.caption { margin: 20px 0 0 160px; height: 26px; font-size: 20.3px; line-height: 26px; font-weight: 300; color: #333; }

/* free canvas of diagrams */
.canvas { position: relative; height: 640px; margin-top: 17px; }
.er {
  position: absolute;
  border: 2px solid #5fb7e5;
  background: linear-gradient(to bottom right, #fff 5%, #cfe5fd 55%, #acd3fb 100%);
  font-family: "Liberation Mono", "DejaVu Sans Mono", monospace;
  color: #333;
  filter: blur(.3px);
}
.er-title { display: flex; align-items: center; justify-content: center; border-bottom: 2px solid #5fb7e5; }
.er-body { padding-left: 4px; }
.er-row { display: grid; white-space: pre; }
.er-row u { text-underline-offset: 2px; }

.o1 { left: 183px; top: 28px; width: 228px; height: 100px; font-size: 13.2px; line-height: 16px; }
.o1 .er-title { height: 26px; }
.o1 .er-body { padding-top: 2px; }
.o1 .er-row { grid-template-columns: 99.6px 84.4px auto; }

.u1 { left: 607px; top: 35px; width: 175px; height: 83px; font-size: 13.2px; line-height: 16.4px; }
.u1 .er-title { height: 25px; padding-top: 2px; }
.u1 .er-body { padding-top: 2px; }
.u1 .er-row { grid-template-columns: 41px 92px auto; }

.o2 { left: 199px; top: 246px; width: 207px; height: 91px; font-size: 12px; line-height: 14.7px; }
.o2 .er-title { height: 23px; padding-top: 1px; }
.o2 .er-body { padding-top: 2px; }
.o2 .er-row { grid-template-columns: 90.5px 76px auto; }

.u2 { left: 584px; top: 252px; width: 161px; height: 76px; font-size: 12.2px; line-height: 14.7px; }
.u2 .er-title { height: 23px; padding-top: 2px; }
.u2 .er-body { padding-top: 2px; }
.u2 .er-row { grid-template-columns: 37px 84px auto; }

.o3 { left: 177px; top: 478px; width: 234px; height: 94px; font-size: 12.4px; line-height: 15px; }
.o3 .er-title { height: 24px; padding-top: 2px; }
.o3 .er-body { padding-top: 3px; }
.o3 .er-row { grid-template-columns: 92.5px 78.5px auto; }

.u3 { left: 583px; top: 485px; width: 163px; height: 77px; font-size: 12.4px; line-height: 15px; }
.u3 .er-title { height: 23px; padding-top: 2px; }
.u3 .er-body { padding-top: 3px; }
.u3 .er-row { grid-template-columns: 38px 85px auto; }

.link { position: absolute; left: 411px; top: 520px; width: 172px; height: 30px; }
.link-label {
  position: absolute;
  left: 445px;
  top: 529px;
  width: 103px;
  overflow: hidden;
  text-indent: -2px;
  font-family: "Liberation Mono", monospace;
  font-size: 12.4px;
  line-height: 16px;
  color: #333;
  white-space: pre;
}

.vline { position: absolute; display: block; width: 2px; background: #5a5a5a; }
.v1 { left: 872px; top: 173px; height: 233px; }
.v2 { left: 877px; top: 420px; height: 214px; }

.palette {
  position: absolute;
  display: flex;
  flex-direction: column;
  background: #eee;
  border-top: 1px solid #6aa9dc;
  box-shadow: 0 3px 10px rgba(0, 0, 0, .22);
  font-family: "Open Sans", sans-serif;
  color: #333;
}
.pal-title { flex: none; background: #fff; display: flex; justify-content: space-between; font-size: 11.8px; line-height: 15px; }
.pal-x { display: flex; align-items: center; justify-content: center; flex: none; background: #c75050; color: #fff; font-size: 13px; font-weight: 700; }
.pal-grid { display: grid; }
.cell { display: flex; align-items: center; justify-content: center; }
.pi { width: 16px; height: 16px; }
.cell-red { background: #c8deef; outline: 2px solid #e3282c; position: relative; }
.cell-sel { background: #c5dcf0; }

.pal1 { left: 804px; top: 188px; width: 67px; height: 199px; }
.pal1 .pal-title { height: 27px; padding: 7px 1px 0 8px; align-items: flex-start; }
.pal1 .pal-x { width: 18px; height: 18px; margin-top: 0; }
.pal1 .pal-grid { padding: 4px 0 0 1.5px; grid-template-columns: repeat(3, 21px); grid-auto-rows: 20.7px; }

.pal2 { left: 807px; top: 420px; width: 69px; height: 203px; }
.pal2 .pal-title { height: 30px; padding: 6px 1px 0 8px; align-items: flex-start; }
.pal2 .pal-x { width: 19px; height: 20px; }
.pal2 .pal-grid { padding: 1px 0 0 1.25px; grid-template-columns: repeat(3, 21.5px); grid-auto-rows: 21px; }

.tooltip {
  position: absolute;
  left: 842px;
  top: 310px;
  width: 57px;
  height: 14px;
  background: #fff;
  border: 1px solid #8c8c8c;
  box-shadow: 2px 2px 2px rgba(0, 0, 0, .3);
  font-family: "Open Sans", sans-serif;
  font-size: 10px;
  line-height: 12px;
  color: #555;
  text-align: center;
  white-space: nowrap;
}

/* footer */
.footer { margin-top: auto; flex: none; }
.addr {
  display: flex;
  justify-content: center;
  gap: 30px;
  height: 28px;
  margin-bottom: 20px;
  font-size: 18.6px;
  line-height: 28px;
  font-weight: 300;
  color: #222;
}
.tel { font-family: "Liberation Mono", monospace; font-size: 15.5px; position: relative; top: -3px; }
.bar { display: block; width: 1240px; height: 31px; }

/* watermarks */
.wm {
  position: absolute;
  width: 300px;
  height: 100px;
  display: flex;
  align-items: flex-start;
  gap: 7px;
  transform: rotate(-33deg);
  transform-origin: 42px 42px;
  color: rgba(0, 0, 0, .035);
  fill: rgba(0, 0, 0, .035);
  pointer-events: none;
}
.wm-logo { flex: none; width: 84px; height: 84px; }
.wm-text { padding-top: 12px; white-space: nowrap; }
.wm-name { font-size: 38px; line-height: 40px; font-weight: 700; }
.wm-tm { font-family: "Liberation Sans", Arial, sans-serif; font-size: 9px; font-weight: 400; line-height: 0; vertical-align: 22px; }
.wm-url { font-family: "Liberation Sans", Arial, sans-serif; font-size: 21px; line-height: 22px; padding-left: 8px; }
.wm1 { left: 540px; top: 451px; }
.wm2 { left: 281px; top: 868px; }
.wm3 { left: 709px; top: 903px; }
.wm4 { left: 446px; top: 1330px; }
```
